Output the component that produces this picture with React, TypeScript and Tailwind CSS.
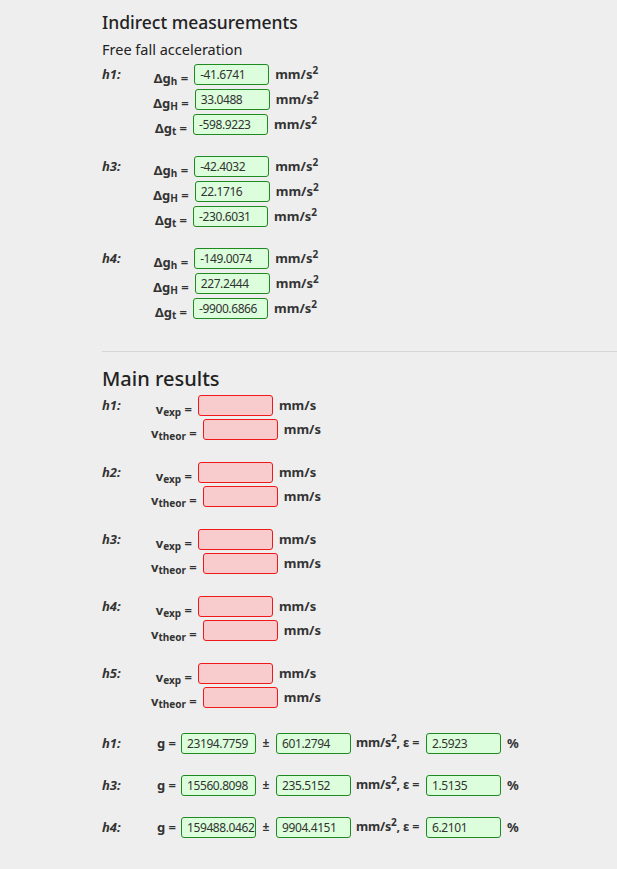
import React from 'react'

const font = { fontFamily: '"Noto Sans", "Open Sans", sans-serif' }

const Field = ({ value, bad }: { value?: string; bad?: boolean }) => (
  <div
    className={
      bad
        ? 'shrink-0 w-[75px] h-[21px] rounded-[3px] border border-[#f01818] bg-[#f8cccc]'
        : 'shrink-0 w-[75px] h-[21px] rounded-[3px] border border-[#1f8a1f] bg-[#dcfedc] pl-[5px] text-[12px] leading-[19px] text-[#333] tracking-[-0.4px] whitespace-nowrap overflow-hidden'
    }
  >
    {value}
  </div>
)

const Sup2 = () => <sup className="text-[10px] relative top-[-0.55em]">2</sup>

const Sym = ({ base, sub }: { base: string; sub: string }) => (
  <span className="whitespace-nowrap font-bold text-[13px] text-[#333]">
    {base}
    <sub className="text-[10px] relative top-[2px]">{sub}</sub> =
  </span>
)

const dg = [
  { h: 'h1:', vals: ['-41.6741', '33.0488', '-598.9223'] },
  { h: 'h3:', vals: ['-42.4032', '22.1716', '-230.6031'] },
  { h: 'h4:', vals: ['-149.0074', '227.2444', '-9900.6866'] },
]

const subs = ['h', 'H', 't']

const gRows = [
  { h: 'h1:', g: '23194.7759', d: '601.2794', e: '2.5923' },
  { h: 'h3:', g: '15560.8098', d: '235.5152', e: '1.5135' },
  { h: 'h4:', g: '159488.0462', d: '9904.4151', e: '6.2101' },
]

const Label = ({ text }: { text: string }) => (
  <div className="w-[52px] shrink-0 pt-[1px] font-bold italic text-[13px] text-[#333]">{text}</div>
)

export default function App() {
  return (
    <div className="min-h-[869px] bg-[#eeeeee] text-[#222] pl-[102px] pt-[8px]" style={font}>
      <h2 className="text-[17.5px] leading-[28px] font-medium text-[#222]">Indirect measurements</h2>
      <h3 className="text-[14.5px] leading-[22px] mt-[2px] text-[#222]">Free fall acceleration</h3>

      <div className="mt-[4px]">
        {dg.map((grp, gi) => (
          <div key={gi} className={gi > 0 ? 'flex mt-[17px]' : 'flex'}>
            <Label text={grp.h} />
            <div className="w-[164px] flex flex-col items-center">
              {grp.vals.map((v, i) => (
                <div key={i} className="h-[25px] flex items-start gap-[6px] whitespace-nowrap">
                  <div className="pt-[1px]"><Sym base="Δg" sub={subs[i]} /></div>
                  <Field value={v} />
                  <span className="font-bold text-[13px] text-[#333] pt-[1px]">mm/s<Sup2 /></span>
                </div>
              ))}
            </div>
          </div>
        ))}
      </div>

      <div className="h-px bg-[#d6d6d6] mt-[28px]" />

      <h2 className="text-[20px] leading-[30px] font-medium mt-[12px] text-[#222]">Main results</h2>

      <div className="mt-[1px]">
        {['h1:', 'h2:', 'h3:', 'h4:', 'h5:'].map((h, gi) => (
          <div key={gi} className={gi > 0 ? 'flex mt-[19px]' : 'flex'}>
            <Label text={h} />
            <div className="w-[164px] flex flex-col items-center">
              {['exp', 'theor'].map((s) => (
                <div key={s} className="h-[24px] flex items-start gap-[6px] whitespace-nowrap">
                  <div className="pt-[1px]"><Sym base="v" sub={s} /></div>
                  <Field bad />
                  <span className="font-bold text-[13px] text-[#333] pt-[1px]">mm/s</span>
                </div>
              ))}
            </div>
          </div>
        ))}
      </div>

      <div className="mt-[22px]">
        {gRows.map((r, i) => (
          <div key={i} className={i > 0 ? 'flex items-start h-[21px] mt-[21px] whitespace-nowrap' : 'flex items-start h-[21px] whitespace-nowrap'}>
            <Label text={r.h} />
            <span className="pl-[3px] pt-[1px] w-[27px] shrink-0 font-bold text-[13px] text-[#333]">g =</span>
            <Field value={r.g} />
            <span className="w-[20px] shrink-0 text-center pt-[1px] font-bold text-[12px] text-[#333]">±</span>
            <Field value={r.d} />
            <span className="pl-[5px] w-[75px] shrink-0 pt-[1px] font-bold text-[12.5px] tracking-[-0.2px] text-[#333]">
              mm/s<Sup2 />, ε =
            </span>
            <Field value={r.e} />
            <span className="pl-[6px] pt-[1px] font-bold text-[13px] text-[#333]">%</span>
          </div>
        ))}
      </div>
    </div>
  )
}
